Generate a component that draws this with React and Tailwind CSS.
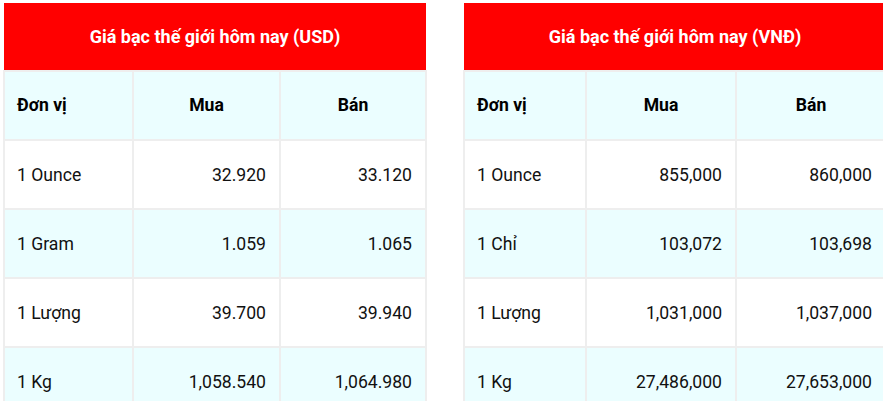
import React from "react";

const usdRows = [
  ["1 Ounce", "32.920", "33.120"],
  ["1 Gram", "1.059", "1.065"],
  ["1 Lượng", "39.700", "39.940"],
  ["1 Kg", "1,058.540", "1,064.980"],
];

const vndRows = [
  ["1 Ounce", "855,000", "860,000"],
  ["1 Chỉ", "103,072", "103,698"],
  ["1 Lượng", "1,031,000", "1,037,000"],
  ["1 Kg", "27,486,000", "27,653,000"],
];

function PriceTable({ title, rows, cols }) {
  return (
    <table className="w-[422px] shrink-0 border-collapse table-fixed text-[17.6px] text-[#111]">
      <colgroup>
        <col style={{ width: cols[0] }} />
        <col style={{ width: cols[1] }} />
        <col style={{ width: cols[2] }} />
      </colgroup>
      <thead>
        <tr className="h-[68px] bg-[#ff0000]">
          <th colSpan={3} className="text-center text-[18px] font-bold text-white">
            {title}
          </th>
        </tr>
        <tr className="h-[69px] bg-[#ebfeff]">
          <th className="border-2 border-[#eeeeee] px-[12px] text-left font-bold text-black">Đơn vị</th>
          <th className="border-2 border-[#eeeeee] px-[12px] text-center font-bold text-black">Mua</th>
          <th className="border-2 border-[#eeeeee] px-[12px] text-center font-bold text-black">Bán</th>
        </tr>
      </thead>
      <tbody>
        {rows.map((r, i) => (
          <tr key={r[0]} className={i % 2 === 0 ? "h-[69px] bg-white" : "h-[69px] bg-[#ebfeff]"}>
            <td className="border-2 border-[#eeeeee] px-[12px] pt-[2px] text-left">{r[0]}</td>
            <td className="border-2 border-[#eeeeee] px-[13px] pt-[2px] text-right">{r[1]}</td>
            <td className="border-2 border-[#eeeeee] px-[13px] pt-[2px] text-right">{r[2]}</td>
          </tr>
        ))}
      </tbody>
    </table>
  );
}

export default function App() {
  return (
    <div className="h-[401px] w-[883px] overflow-hidden bg-white font-['Roboto',sans-serif]">
      <div className="flex gap-[36px] pl-[3px] pt-[3px]">
        <PriceTable title="Giá bạc thế giới hôm nay (USD)" rows={usdRows} cols={[129, 147, 146]} />
        <PriceTable title="Giá bạc thế giới hôm nay (VNĐ)" rows={vndRows} cols={[122, 150, 150]} />
      </div>
    </div>
  );
}
